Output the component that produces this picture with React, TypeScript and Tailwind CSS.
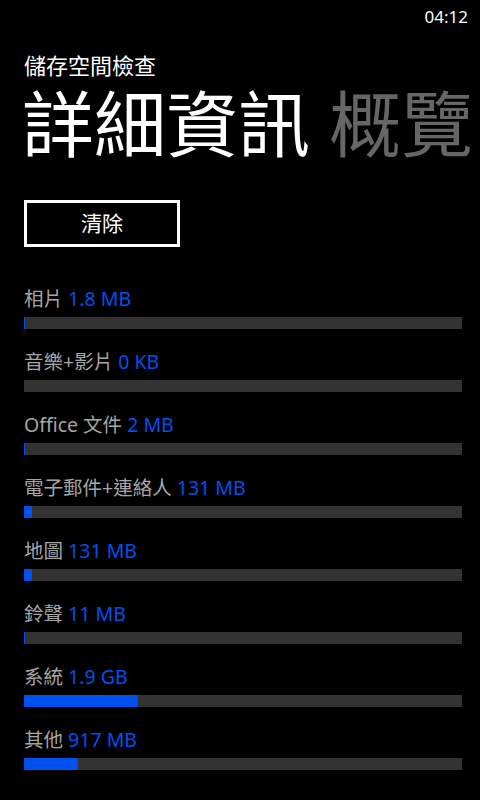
import React from "react";

const rows: { label: string; value: string; fill: number }[] = [
  { label: "相片", value: "1.8 MB", fill: 1 },
  { label: "音樂+影片", value: "0 KB", fill: 0 },
  { label: "Office 文件", value: "2 MB", fill: 1 },
  { label: "電子郵件+連絡人", value: "131 MB", fill: 8 },
  { label: "地圖", value: "131 MB", fill: 8 },
  { label: "鈴聲", value: "11 MB", fill: 1 },
  { label: "系統", value: "1.9 GB", fill: 114 },
  { label: "其他", value: "917 MB", fill: 54 },
];

const font = { fontFamily: '"Noto Sans", "Noto Sans CJK TC", sans-serif' };
const bigFont = { fontFamily: '"Liberation Sans", "Noto Sans CJK TC", sans-serif' };

export default function App() {
  return (
    <div className="w-[480px] h-[800px] bg-black text-white overflow-hidden flex flex-col" style={font}>
      <div className="h-[32px] flex items-center justify-end pr-[12px] text-[17px] leading-none text-white">
        04:12
      </div>
      <div className="pl-[24px] mt-[20px] text-[22px] leading-[26px] text-white">儲存空間檢查</div>
      <div className="pl-[22px] mt-[12px] text-[72px] leading-[72px] whitespace-nowrap" style={bigFont}>
        <span className="text-white">詳細資訊</span>
        <span className="text-[#666666] ml-[19px]">概覽</span>
      </div>
      <div className="pl-[24px] mt-[38px]">
        <div className="w-[156px] h-[47px] border-[3px] border-white flex items-center justify-center text-[21px] text-white">
          清除
        </div>
      </div>
      <div className="mt-[39px] flex flex-col gap-[20px] pl-[24px] pr-[18px]">
        {rows.map((r) => (
          <div key={r.label} className="flex flex-col">
            <div className="h-[26px] text-[19.5px] leading-[26px] whitespace-nowrap">
              <span className="text-[#a6a6a6]">{r.label}</span>{" "}
              <span className="text-[#0050ef]">{r.value}</span>
            </div>
            <div className="mt-[5px] h-[12px] bg-[#333333] flex">
              <div className="h-full bg-[#0050ef]" style={{ width: r.fill }} />
            </div>
          </div>
        ))}
      </div>
    </div>
  );
}
